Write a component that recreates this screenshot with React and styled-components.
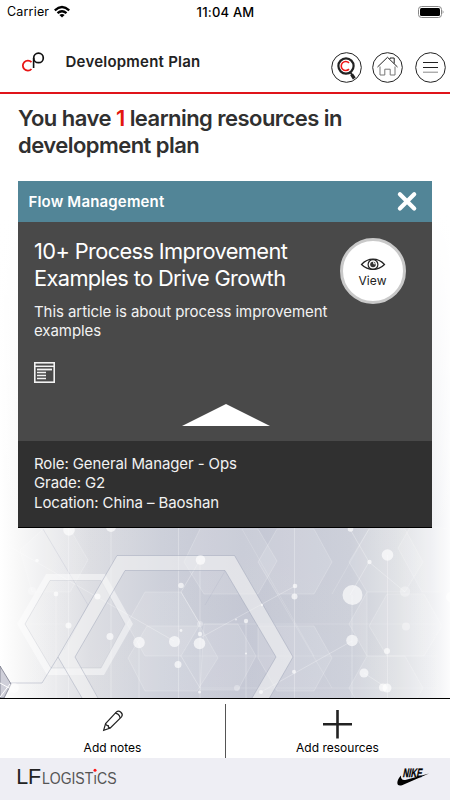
import React from "react";
import styled, { createGlobalStyle } from "styled-components";

const GlobalStyle = createGlobalStyle`
  * { box-sizing: border-box; }
  body { margin: 0; background: #fff; }
  h1, h2, p { margin: 0; }
  button { border: 0; padding: 0; background: none; font: inherit; color: inherit; }
  svg { display: block; flex: none; overflow: visible; }
`;

const Screen = styled.div`
  width: 450px;
  height: 800px;
  display: flex;
  flex-direction: column;
  overflow: hidden;
  background: #fff;
  color: #000;
  font-family: Inter, "Liberation Sans", sans-serif;
`;

const StatusBar = styled.div`
  height: 24px;
  display: grid;
  grid-template-columns: 1fr auto 1fr;
  align-items: center;
  padding: 0 6px 0 7px;
  font-size: 12.5px;
  line-height: 24px;
`;

const Carrier = styled.div`
  display: flex;
  align-items: center;
  gap: 5px;
  letter-spacing: 0.18px;
`;

const Clock = styled.div`
  font-weight: 500;
  font-size: 13px;
  letter-spacing: 0.2px;
`;

const BatterySlot = styled.div`
  display: flex;
  justify-content: flex-end;
  padding-bottom: 1px;
`;

const Header = styled.header`
  height: 70px;
  display: flex;
  align-items: flex-start;
  padding: 27px 4px 0 21px;
  border-bottom: 2px solid #e0141a;
`;

const PageTitle = styled.h1`
  flex: 1;
  margin: 1px 0 0 20.5px;
  font-size: 15px;
  line-height: 20px;
  font-weight: 600;
  letter-spacing: ${(p) => p.$tracking}px;
  color: #222;
`;

const HeaderActions = styled.nav`
  display: flex;
  padding-top: 1px;
`;

const RoundButton = styled.button`
  width: 31px;
  height: 31px;
  margin-left: ${(p) => p.$space || 0}px;
`;

const Main = styled.main`
  position: relative;
  flex: 1;
  min-height: 0;
  padding: 11px 17px 0 18px;
`;

const Backdrop = styled.svg`
  position: absolute;
  inset: 0;
  overflow: hidden;
`;

const Content = styled.div`
  position: relative;
`;

const Summary = styled.h2`
  height: 76px;
  font-size: 22px;
  line-height: 27.4px;
  font-weight: 600;
  letter-spacing: ${(p) => p.$tracking}px;
  color: #303030;
`;

const Count = styled.span`
  color: #e3170f;
`;

const Card = styled.article`
  width: 414.5px;
  margin-left: -0.5px;
  color: #fff;
  border-bottom: 1px solid #000;
`;

const CardHeader = styled.header`
  height: 41px;
  display: flex;
  align-items: center;
  justify-content: space-between;
  padding: 0 15px 0 11px;
  background: #528597;
  font-size: 15px;
  font-weight: 600;
  letter-spacing: 0.17px;
`;

const CardBody = styled.div`
  height: 219px;
  display: flex;
  flex-direction: column;
  padding: 16px 26.5px 0 16.5px;
  background: #494949;
`;

const Intro = styled.div`
  display: flex;
  justify-content: space-between;
`;

const ArticleTitle = styled.h2`
  font-size: 21.8px;
  line-height: 26.5px;
  font-weight: 400;
  letter-spacing: -0.62px;
  white-space: pre-line;
`;

const ViewButton = styled.button`
  width: 66px;
  height: 66px;
  flex: none;
  display: flex;
  flex-direction: column;
  align-items: center;
  padding-top: 16px;
  border: 3px solid #c9c9c9;
  border-radius: 50%;
  background: #fff;
  color: #222;
  font-size: 12px;
  line-height: 18px;
  letter-spacing: 0.1px;
`;

const Description = styled.p`
  margin-top: -2.5px;
  font-size: 15px;
  line-height: 19.6px;
  letter-spacing: -0.07px;
  color: #f2f2f2;
  white-space: pre-line;
`;

const ArticleMark = styled.div`
  margin-top: 21.8px;
`;

const Collapse = styled.button`
  width: 88px;
  margin: 21px 0 0 148px;
`;

const Facts = styled.div`
  height: 86px;
  padding: 12.5px 16.5px;
  background: #303030;
  color: #f2f2f2;
  font-size: 15px;
  line-height: 19.5px;
  letter-spacing: -0.1px;
`;

const ActionBar = styled.div`
  height: 60px;
  display: grid;
  grid-template-columns: 1fr 1fr;
  border-top: 1px solid #000;
  background: #fff;
`;

const Action = styled.button`
  display: flex;
  flex-direction: column;
  align-items: center;
  padding-top: ${(p) => p.$top}px;
  gap: ${(p) => p.$gap}px;
  font-size: 12px;
  line-height: 16px;
  letter-spacing: 0;

  & + & {
    border-left: 1px solid #555;
    margin-top: 5px;
    padding-right: 1px;
  }
`;

const Footer = styled.footer`
  height: 42px;
  display: flex;
  justify-content: space-between;
  align-items: flex-start;
  padding: 7px 20px 0 17px;
  background: #eeeef4;
`;

const LogoText = styled.text`
  font-family: "Liberation Sans", sans-serif;
`;

const nodes = [
  [69, 530, 5.8], [111, 527, 5], [37, 560.5, 1.8], [32, 591, 4, 0.3], [56, 594, 2.4], [97.5, 596.5, 3], [68.5, 625.5, 3],
  [110, 636.5, 3.5], [139, 642.5, 5.8], [174.5, 641.5, 5.5], [199.5, 643.5, 5.8], [200.5, 560, 4.8], [181, 585.5, 2.8],
  [178, 664.5, 3.5], [200, 634, 2.2], [181, 630.5, 1.4], [199.5, 692, 1.5], [14, 688, 5, 0.5],
  [200, 624, 3, 0.3], [295, 586, 2.3], [294.5, 596.5, 3], [246, 621, 2.2], [236, 619.5, 0.9], [262, 605, 1.2],
  [246, 653.5, 1.1], [294, 671.8, 2], [261, 692, 2], [237, 688, 3, 0.3], [350.5, 529, 2.8], [369.5, 562, 2.2],
  [387.5, 555, 5.8], [352.5, 595, 10], [405, 591.5, 5.2, 0.3], [352, 640.5, 5.8], [406, 626.5, 4, 0.35], [387, 651, 3],
  [364, 673, 4.5], [383, 687.5, 4], [387, 688, 4.5], [451, 597, 5],
];

const meshes = [
  "43,529 70,529 88,560 70,592 32,592 20,550",
  "145,592 181,592 200,624 181,656 145,656 127,624",
  "147,626 200,626 218,658 197,691 145,691 128,658",
  "277,529 314,529 332,562 314,594 277,594 258,562",
  "200,529 258,529 277,561 258,594 204,594 184,562",
  "204,624 238,624 256,656 238,690 200,690",
  "258,626 314,626 332,658 314,691 277,691 258,658",
  "369,529 405,529 423,562 405,592 367,592 349,562",
  "387,594 424,594 442,626 424,656 387,656 369,626",
  "367,592 349,624 367,656 405,656 423,688 405,720 367,720 349,688 367,656",
  "398,548 412,524 449,529 449,592 422,592",
];

function NetworkBackdrop() {
  return (
    <Backdrop width="450" height="604" viewBox="0 94 450 604" aria-hidden="true">
      <defs>
        <linearGradient id="tone">
          <stop offset="0" stopColor="#fff" />
          <stop offset="0.04" stopColor="#f8f8f8" />
          <stop offset="0.2" stopColor="#dcdde2" />
          <stop offset="0.36" stopColor="#cccfd9" />
          <stop offset="0.54" stopColor="#c3c6d3" />
          <stop offset="0.78" stopColor="#cccfd9" />
          <stop offset="0.88" stopColor="#dddfe3" />
          <stop offset="0.96" stopColor="#eff0f3" />
          <stop offset="1" stopColor="#fcfcfd" />
        </linearGradient>
        <linearGradient id="fade" x1="0" y1="0" x2="0" y2="1">
          <stop offset="0" stopColor="#fff" />
          <stop offset="0.2" stopColor="#fff" />
          <stop offset="0.72" stopColor="#fff" stopOpacity="0.02" />
          <stop offset="1" stopColor="#fff" stopOpacity="0.05" />
        </linearGradient>
      </defs>
      <rect y="94" width="450" height="604" fill="url(#tone)" />
      <rect y="94" width="450" height="604" fill="url(#fade)" />
      <g fill="#fff" fillOpacity="0.11" stroke="#fff" strokeOpacity="0.25" strokeWidth="0.8">
        {meshes.map((points) => (
          <polygon key={points} points={points} />
        ))}
      </g>
      <path d="M43 529L88 605 64 650M205 605L225 571" fill="none" stroke="#aab0c2" strokeOpacity="0.25" />
      <g fill="none" stroke="#fff" strokeOpacity="0.35" strokeWidth="0.8">
        <path d="M178.500 527V698M200 560V698M294.500 527V698M352 595V698M387.500 555V698M111 527V698M68.500 527V698M56 592V698M139 643V698M246 621V698" />
        <path d="M0 541L97 597 174 641M200 560L181 592 200 624M181 656L200 688M200 638L295 586M261 692L352 641M350 529L369 562 350 595M369 562L405 592M364 673L387 688" />
        <path strokeOpacity="0.2" d="M0 624H66M200 624H450M180 656H450M200 688H450M242 529L314 656M277 594L332 688M369 529L332 594" />
      </g>
      <path
        fillRule="evenodd"
        d="M46 574H105L133 624 104 675H47L17 624ZM50 580.500L25 624 51 668H101L125 624 101 580.500Z"
        fill="#fff"
        fillOpacity="0.48"
      />
      <path d="M50 580.500H101L125 624 101 668H51L25 624Z" fill="none" stroke="#a9adba" strokeOpacity="0.35" strokeWidth="0.7" />
      <path
        fillRule="evenodd"
        d="M117 555.500H234.500L293 657 234.500 759H117L58 657ZM125 570.500L75 657 125 744H225L276 657 225 570.500Z"
        fill="#f4f4f4"
        fillOpacity="0.56"
      />
      <g fill="none" stroke="#989eb4" strokeOpacity="0.55" strokeWidth="0.8">
        <path d="M117 555.500H234.500L293 657 234.500 759M58 657L117 555.500M58 657L82 698" />
        <path d="M98 698L75 657 125 570.500H225L276 657 252 698M10 683H42L58 657" />
      </g>
      <path d="M0 666L11 684 4 698H0Z" fill="#cfcfd9" stroke="#777989" strokeWidth="0.8" />
      <path d="M0 683L9 688M0 697L10 684" stroke="#fff" />
      <g fill="#fff">
        {nodes.map(([x, y, r, opacity = 0.66]) => (
          <circle key={`${x}-${y}`} cx={x} cy={y} r={r} fillOpacity={opacity} />
        ))}
      </g>
    </Backdrop>
  );
}

function WifiIcon() {
  return (
    <svg width="16" height="12" viewBox="0 0 16 12" fill="none" stroke="#000" strokeWidth="2.300">
      <path d="M0.800 4.300Q8-2.300 15.200 4.300M3.500 7.200Q8 3.200 12.500 7.200" />
      <path d="M5.400 9Q8 6.900 10.600 9L8 11.600Z" fill="#000" stroke="none" />
    </svg>
  );
}

function BatteryIcon() {
  return (
    <svg width="26" height="12" viewBox="0 0 26 12">
      <rect x="0.500" y="0.500" width="23" height="11" rx="3" fill="none" stroke="#888" />
      <rect x="2" y="2" width="20" height="8" rx="1.500" />
      <path d="M24.700 4Q26.500 6 24.700 8Z" fill="#777" />
    </svg>
  );
}

function CpLogo() {
  return (
    <svg width="24" height="20" viewBox="0 0 24 20" fill="none">
      <path d="M10.500 11.200A5 5 0 1 0 10.500 18" stroke="#e81515" strokeWidth="1.800" />
      <circle cx="17.500" cy="6.900" r="4.800" stroke="#111" strokeWidth="1.700" />
      <path d="M12.600 7V17" stroke="#111" strokeWidth="1.600" />
    </svg>
  );
}

function SearchIcon() {
  return (
    <svg width="31" height="31" viewBox="0 0 31 31" fill="none">
      <circle cx="15.500" cy="15.500" r="14.800" stroke="#222" />
      <circle cx="15" cy="14" r="7.600" stroke="#222" strokeWidth="2.200" />
      <path d="M18 10.900A4.500 4.500 0 1 0 18 17.100" stroke="#f01818" strokeWidth="1.600" />
      <path d="M19.600 20.700L21 22.700" stroke="#222" strokeWidth="1.800" />
      <path d="M20.600 22.300L23.300 26.500" stroke="#222" strokeWidth="3.300" />
    </svg>
  );
}

function HomeIcon() {
  return (
    <svg width="31" height="31" viewBox="0 0 31 31" fill="none" stroke="#222">
      <circle cx="15.500" cy="15.500" r="14.800" />
      <path d="M5.500 15L15.500 5.300 25.500 15" />
      <path d="M18 7V6H22.200V11.500" />
      <path d="M8 14.500V23H12.800V17.200H18.200V23H23V14.500" stroke="#777" />
    </svg>
  );
}

function MenuIcon() {
  return (
    <svg width="31" height="31" viewBox="0 0 31 31" fill="none" stroke="#222">
      <circle cx="15.500" cy="15.500" r="14.800" />
      <path d="M8 10.500H23M8 15.500H23" />
      <path d="M8 20.200H23" stroke="#888" />
    </svg>
  );
}

function CloseIcon() {
  return (
    <svg width="20" height="20" viewBox="0 0 20 20" stroke="#fff" strokeWidth="4.200" strokeLinecap="round">
      <path d="M2.900 2.300L17.200 16.600M17.200 2.300L2.900 16.600" />
    </svg>
  );
}

function EyeIcon() {
  return (
    <svg width="26" height="15" viewBox="0 0 26 15" fill="none" stroke="#222">
      <path d="M1.500 7.500C8 .4 18 .4 24.500 7.500 18 14 8 14 1.500 7.500Z" strokeWidth="1.200" />
      <circle cx="13" cy="7.500" r="4.900" strokeWidth="1.200" />
      <circle cx="13" cy="7.500" r="2.800" fill="#333" stroke="none" />
      <path d="M13.700 4.800V6.800H15.700" stroke="#fff" />
    </svg>
  );
}

function ArticleIcon() {
  return (
    <svg width="21" height="21" viewBox="0 0 21 21" fill="none" stroke="#f2f2f2">
      <rect x="0.800" y="0.800" width="19.400" height="19.400" strokeWidth="1.600" />
      <path d="M1 4.300H20" strokeWidth="1.500" />
      <path d="M3 7.500H18" strokeWidth="1.800" />
      <path d="M3 10.500H12M3 13.500H12M3 16.500H12" strokeWidth="1.600" />
    </svg>
  );
}

function PencilIcon() {
  return (
    <svg width="20" height="21" viewBox="0 0 20 21" fill="none" stroke="#222" strokeWidth="1.200">
      <path d="M.7 20.200L2.600 13.500 13.500 1.900C16-.6 21 3.600 18.500 6.800L7.300 18Z" />
      <path d="M2.600 13.500Q3 15.700 5.200 15.700 5 17.700 7.300 18M12.200 3.200Q16 3.600 17.200 8" />
    </svg>
  );
}

function PlusIcon() {
  return (
    <svg width="29" height="29" viewBox="0 0 29 29" stroke="#222" strokeWidth="2.600">
      <path d="M14.500 0V28.500M0 14.300H29" />
    </svg>
  );
}

function LogisticsLogo() {
  return (
    <svg width="101" height="28" viewBox="0 -3 101 28">
      <LogoText x="-0.800" y="16" fontSize="21.500" textLength="25" lengthAdjust="spacingAndGlyphs" fill="#222">LF</LogoText>
      <LogoText x="25" y="16" fontSize="16" textLength="74.500" lengthAdjust="spacingAndGlyphs" fill="#555">LOGISTıCS</LogoText>
      <circle cx="78" cy="2.300" r="1.500" fill="#ff1717" />
    </svg>
  );
}

function NikeLogo() {
  return (
    <svg width="33" height="28" viewBox="0 -3 33 28">
      <path d="M4 7.500C-1 13-1 19 5 17.300L32 5.400 9.200 11.800C5.300 12.800 3.700 11 4 7.500Z" />
      <LogoText x="6" y="9.400" fontSize="12" fontWeight="700" stroke="#000" strokeWidth="0.350" textLength="19" lengthAdjust="spacingAndGlyphs" transform="translate(1.500 0) skewX(-12)">NIKE</LogoText>
    </svg>
  );
}

export default function App() {
  return (
    <Screen>
      <GlobalStyle />
      <StatusBar>
        <Carrier>Carrier <WifiIcon /></Carrier>
        <Clock>11:04 AM</Clock>
        <BatterySlot><BatteryIcon /></BatterySlot>
      </StatusBar>
      <Header>
        <CpLogo />
        <PageTitle $tracking={0.23}>Development Plan</PageTitle>
        <HeaderActions>
          <RoundButton aria-label="Search"><SearchIcon /></RoundButton>
          <RoundButton aria-label="Home" $space={10}><HomeIcon /></RoundButton>
          <RoundButton aria-label="Menu" $space={12}><MenuIcon /></RoundButton>
        </HeaderActions>
      </Header>
      <Main>
        <NetworkBackdrop />
        <Content>
          <Summary $tracking={-0.54}>
            You have <Count>1</Count> learning resources in<br />development plan
          </Summary>
          <Card>
            <CardHeader>
              Flow Management
              <button aria-label="Close"><CloseIcon /></button>
            </CardHeader>
            <CardBody>
              <Intro>
                <ArticleTitle>{"10+ Process Improvement\nExamples to Drive Growth"}</ArticleTitle>
                <ViewButton><EyeIcon />View</ViewButton>
              </Intro>
              <Description>{"This article is about process improvement\nexamples"}</Description>
              <ArticleMark><ArticleIcon /></ArticleMark>
              <Collapse aria-label="Collapse">
                <svg width="88" height="22" viewBox="0 0 88 22">
                  <path d="M0 22L44 0 88 22Z" fill="#fff" />
                </svg>
              </Collapse>
            </CardBody>
            <Facts>
              <p>Role: General Manager - Ops</p>
              <p>Grade: G2</p>
              <p>Location: China – Baoshan</p>
            </Facts>
          </Card>
        </Content>
      </Main>
      <ActionBar>
        <Action $top={11} $gap={9}><PencilIcon />Add notes</Action>
        <Action $top={6} $gap={1}><PlusIcon />Add resources</Action>
      </ActionBar>
      <Footer>
        <LogisticsLogo />
        <NikeLogo />
      </Footer>
    </Screen>
  );
}
